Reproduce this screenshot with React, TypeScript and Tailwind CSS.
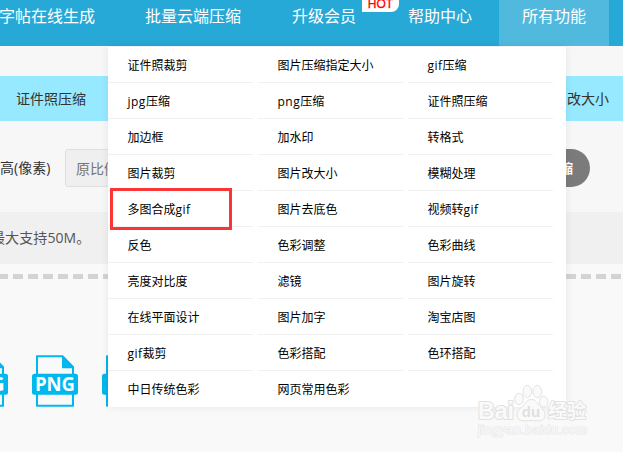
const columns = [
  ['证件照裁剪', 'jpg压缩', '加边框', '图片裁剪', '多图合成gif', '反色', '亮度对比度', '在线平面设计', 'gif裁剪', '中日传统色彩'],
  ['图片压缩指定大小', 'png压缩', '加水印', '图片改大小', '图片去底色', '色彩调整', '滤镜', '图片加字', '色彩搭配', '网页常用色彩'],
  ['gif压缩', '证件照压缩', '转格式', '模糊处理', '视频转gif', '色彩曲线', '图片旋转', '淘宝店图', '色环搭配'],
];

function FileIcon({ label, labelWidth = 40 }: { label: string; labelWidth?: number }) {
  return (
    <svg width="46" height="52" viewBox="0 0 46 52" className="shrink-0">
      <path d="M5 1.2H30.5L41 12V50.8H5Z" fill="#f9f9f9" stroke="#00b7ee" strokeWidth="2" strokeLinejoin="round" />
      <path d="M30 0.8V13.3H41.8Z" fill="#00b7ee" />
      <rect x="0" y="18.7" width="46" height="21" rx="2.5" fill="#00b7ee" />
      <text x="23" y="36" textAnchor="middle" textLength={labelWidth} lengthAdjust="spacingAndGlyphs" fontSize="19.5" fontWeight="700" fill="#fff" fontFamily="'Open Sans', sans-serif">
        {label}
      </text>
    </svg>
  );
}

function Header() {
  return (
    <header className="flex h-[46px] bg-[#27a9d8] text-base leading-[33px] text-white">
      <span className="-ml-px w-[146px] shrink-0">字帖在线生成</span>
      <span className="w-[147px] shrink-0">批量云端压缩</span>
      <span className="relative w-[116px] shrink-0">
        升级会员
        <span className="absolute left-[70px] top-0 h-3 w-[37px] rounded-br-lg bg-white text-center font-['Liberation_Sans',sans-serif] text-[12px] leading-[9px] text-[#f00] [-webkit-text-stroke:0.3px_#f00]">
          HOT
        </span>
      </span>
      <span className="w-[91px] shrink-0">帮助中心</span>
      <span className="w-[110px] shrink-0 bg-[#52b9de] text-center">所有功能</span>
    </header>
  );
}

function MenuLabel({ text }: { text: string }) {
  return text.split(/([a-z]+)/).filter(Boolean).map((part) =>
    /[a-z]/.test(part) ? (
      <span key={part} className="tracking-[0.5px]">{part}</span>
    ) : (
      part
    ),
  );
}

function Menu() {
  return (
    <div className="absolute left-[108px] top-[46px] flex h-[361px] w-[458px] gap-[5px] border-t border-[#f1f1f1] bg-white text-xs text-black shadow-[0_0_8px_rgba(0,0,0,0.08)]">
      {columns.map((items, c) => (
        <ul key={c} className="w-[145px]">
          {items.map((item) => (
            <li key={item} className="h-9 border-b border-[#f0f0f0] pl-[19.5px] leading-[37px] last:nth-[10]:border-b-0">
              <MenuLabel text={item} />
            </li>
          ))}
        </ul>
      ))}
    </div>
  );
}

function Watermark() {
  return (
    <svg className="absolute left-[470px] top-[380px]" width="125" height="65" viewBox="0 0 125 65">
      <g fill="#fafafa" stroke="#e2e2e2" strokeWidth="1" strokeLinejoin="round">
        <g fontWeight="700" fontFamily="'Liberation Sans', 'Noto Sans CJK SC', sans-serif" paintOrder="stroke">
          <text x="8" y="38.5" fontSize="24" textLength="36" lengthAdjust="spacingAndGlyphs" strokeWidth="2.2">Bai</text>
          <text x="78" y="38" fontSize="19" textLength="38" strokeWidth="2">经验</text>
        </g>
        <ellipse cx="49" cy="19" rx="4.3" ry="5.7" />
        <ellipse cx="57.3" cy="11.5" rx="4.3" ry="6" />
        <ellipse cx="67.3" cy="11.5" rx="4.3" ry="6" />
        <ellipse cx="73.7" cy="21.5" rx="4.2" ry="5.5" />
        <path d="M61.5 19.5C66 19.5 67 23 70 26.5C73 29.5 75.5 32 75 36C74 42 68 41 61 40.5C54 41 48 42 47 36C46.5 31 50 29 53 26C56 22.5 57 19.5 61.5 19.5Z" />
        <text x="61" y="37" fontSize="15" textAnchor="middle" fontWeight="700" fill="#e0e0e0" stroke="none" fontFamily="'Liberation Sans', sans-serif">du</text>
        <text x="8" y="54" fontSize="12.5" textLength="109" strokeWidth="1.2" stroke="#e6e6e6" paintOrder="stroke" fontFamily="'Liberation Sans', sans-serif">jingyan.baidu.com</text>
      </g>
    </svg>
  );
}

export default function App() {
  return (
    <div className="relative h-[452px] w-[623px] overflow-hidden whitespace-nowrap bg-[#f9f9f9] font-['Open_Sans','Noto_Sans_CJK_SC',sans-serif] text-sm text-[#333]">
      <Header />
      <div className="h-[166px] bg-[#f7f7f7] pt-[30px]">
        <div className="flex h-[45px] justify-between bg-[#97e9ff] pl-4 pr-[14px] leading-[46px]">
          <span>证件照压缩</span>
          <span>图片改大小</span>
        </div>
        <div className="flex h-[66px] items-end pr-[33px]">
          <span className="w-[65px] leading-[38px]">高(像素)</span>
          <span className="h-[38px] w-[110px] rounded-[3px] border border-[#dfdfdf] bg-[#efefef] pl-2.5 leading-[38px] text-[#757575]">原比例</span>
          <span className="ml-auto h-[38px] w-[110px] rounded-full bg-[#7b7b7b] pr-[17px] text-right text-[13px] font-bold leading-[38px] text-white">开始压缩</span>
        </div>
      </div>
      <div className="h-[52px] bg-[#f0f0f0] leading-[52px] text-[#555]">
        <span className="-ml-[9px] tracking-[0.1px]">最大支持50M。</span>
      </div>
      <div className="-ml-[2.5px] mt-[10px] h-[5px] bg-[repeating-linear-gradient(90deg,#d3d3d3_0px,#d3d3d3_10px,transparent_10px,transparent_14.94px)]" />
      <div className="-ml-[38px] mt-[76px] flex gap-[24px]">
        <FileIcon label="JPG" />
        <FileIcon label="PNG" />
        <FileIcon label="GIF" labelWidth={30} />
      </div>
      <Menu />
      <div className="absolute left-[110px] top-[188px] h-[42px] w-[122px] border-3 border-[#f93535]" />
      <Watermark />
    </div>
  );
}
